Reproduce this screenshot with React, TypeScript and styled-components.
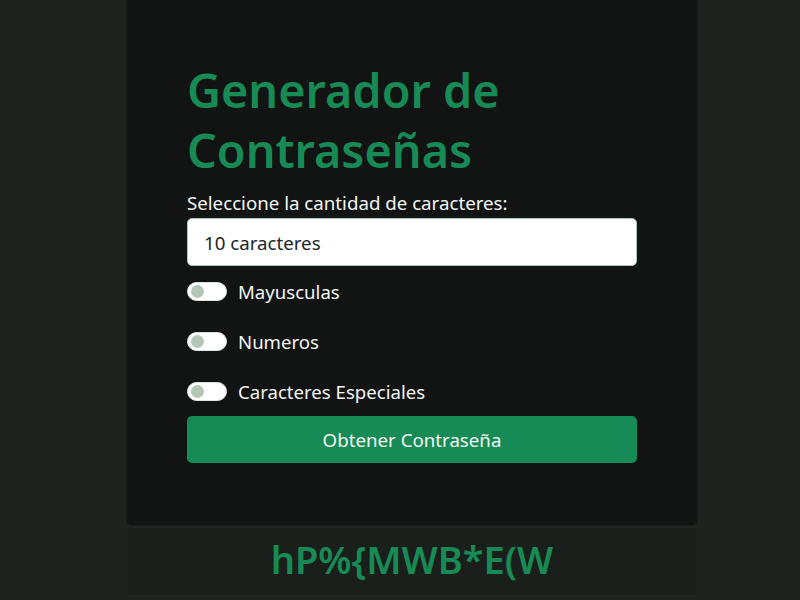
import React from "react";
import styled, { createGlobalStyle } from "styled-components";

const Global = createGlobalStyle`
  html, body { margin: 0; padding: 0; background: #1f231f; }
  body { font-family: "Noto Sans", "Open Sans", sans-serif; color: #f3f6f3; }
  * { box-sizing: border-box; }
`;

const Page = styled.div`
  width: 800px;
  height: 600px;
  overflow: hidden;
  display: flex;
  justify-content: center;
`;

const Column = styled.div`
  width: 572px;
  margin-left: 24px;
  display: flex;
  flex-direction: column;
  gap: 1px;
`;

const Card = styled.div`
  background: #121413;
  border-radius: 0 0 6px 6px;
  border: 1px solid #1a1d1a;
  border-top: none;
  padding: 60px 60px 62px;
  display: flex;
  flex-direction: column;
`;

const Title = styled.h1`
  margin: 0 0 11px;
  font-size: 46.8px;
  line-height: 60px;
  font-weight: 600;
  color: #178a55;
`;

const Label = styled.label`
  font-size: 18.7px;
  line-height: 24px;
  margin-bottom: 3px;
`;

const Input = styled.div`
  height: 48px;
  background: #fff;
  border: 1px solid #a9c9bb;
  border-radius: 5px;
  padding: 0 16px;
  display: flex;
  align-items: center;
  font-size: 18.7px;
  color: #212529;
  margin-bottom: 0;
`;

const SwitchRow = styled.div`
  display: flex;
  align-items: center;
  gap: 11px;
  height: 50px;
  font-size: 18.6px;
`;

const Switch = styled.span`
  width: 40px;
  height: 19px;
  border-radius: 10px;
  background: #fff;
  border: 1px solid #dfe6df;
  position: relative;
  flex: none;
  &::after {
    content: "";
    position: absolute;
    left: 3px;
    top: 2px;
    width: 13px;
    height: 13px;
    border-radius: 50%;
    background: #b4c6b6;
  }
`;

const Button = styled.button`
  height: 47px;
  border: none;
  border-radius: 5px;
  background: #168b55;
  color: #f3f6f3;
  font-family: inherit;
  font-size: 18.7px;
`;

const Output = styled.div`
  height: 69px;
  padding-bottom: 6px;
  background: #1b1f1b;
  border: 1px solid #222622;
  border-radius: 6px;
  display: flex;
  align-items: center;
  justify-content: center;
  font-size: 38px;
  font-weight: 600;
  color: #178a55;
`;

export default function App() {
  return (
    <>
      <Global />
      <Page>
        <Column>
          <Card>
            <Title>
              Generador de
              <br />
              Contraseñas
            </Title>
            <Label>Seleccione la cantidad de caracteres:</Label>
            <Input>10 caracteres</Input>
            <SwitchRow>
              <Switch />
              Mayusculas
            </SwitchRow>
            <SwitchRow>
              <Switch />
              Numeros
            </SwitchRow>
            <SwitchRow>
              <Switch />
              Caracteres Especiales
            </SwitchRow>
            <Button>Obtener Contraseña</Button>
          </Card>
          <Output>hP%&#123;MWB*E(W</Output>
        </Column>
      </Page>
    </>
  );
}
